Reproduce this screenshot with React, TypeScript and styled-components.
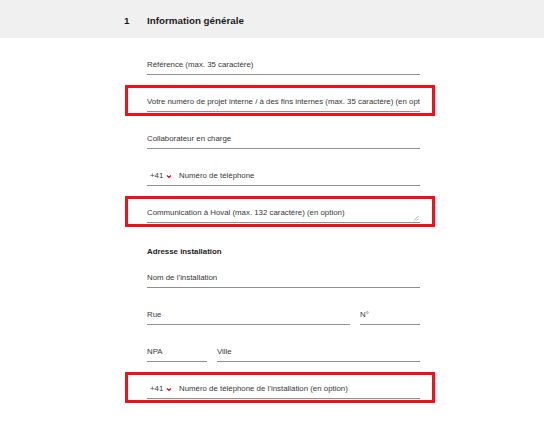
import styled, { createGlobalStyle } from 'styled-components';
import { FC } from 'react';

const GlobalStyle = createGlobalStyle`
  html, body {
    margin: 0;
    padding: 0;
    background: #fff;
    font-family: "Liberation Sans", Arial, sans-serif;
    color: #2b2b2b;
  }
`;

interface FieldProps {
  placeholder: string;
  flagged?: boolean;
}

const TextField: FC<FieldProps> = ({ placeholder, flagged }) => (
  <Field $flagged={flagged}>
    <Input placeholder={placeholder} />
  </Field>
);

const AreaField: FC<FieldProps> = ({ placeholder, flagged }) => (
  <Field $flagged={flagged}>
    <Area rows={1} placeholder={placeholder} />
    <Grip width="6" height="6" viewBox="0 0 6 6">
      <path d="M5.5 1 L1 5.5 M5.5 3.5 L3.5 5.5" stroke="#a0a0a0" strokeWidth="0.8" fill="none" />
    </Grip>
  </Field>
);

const PhoneField: FC<FieldProps> = ({ placeholder, flagged }) => (
  <Field $flagged={flagged}>
    <PhoneRow>
      <Prefix>
        +41
        <svg width="6" height="5" viewBox="0 0 6 5">
          <polyline points="1,1.5 3,3.5 5,1.5" fill="none" stroke="#e2001a" strokeWidth="1.2" />
        </svg>
      </Prefix>
      <Input placeholder={placeholder} />
    </PhoneRow>
  </Field>
);

const App: FC = () => {
  return (
    <>
      <GlobalStyle />
      <Band>
        <Container>
          <SectionHead>
            <Num>1</Num>
            <Title>Information générale</Title>
          </SectionHead>
        </Container>
      </Band>
      <Container>
        <Form>
          <TextField placeholder="Référence (max. 35 caractère)" />
          <TextField
            flagged
            placeholder="Votre numéro de projet interne / à des fins internes (max. 35 caractère) (en option)"
          />
          <TextField placeholder="Collaborateur en charge" />
          <PhoneField placeholder="Numéro de téléphone" />
          <AreaField flagged placeholder="Communication à Hoval (max. 132 caractère) (en option)" />
          <SubHeading>Adresse installation</SubHeading>
          <TextField placeholder="Nom de l’installation" />
          <Pair $cols="1fr 60px">
            <TextField placeholder="Rue" />
            <TextField placeholder="N°" />
          </Pair>
          <Pair $cols="60px 1fr">
            <TextField placeholder="NPA" />
            <TextField placeholder="Ville" />
          </Pair>
          <PhoneField flagged placeholder="Numéro de téléphone de l’installation (en option)" />
        </Form>
      </Container>
    </>
  );
};

export default App;

const Band = styled.div`
  background: #f1f0f0;
  height: 38px;
  display: flex;
  align-items: center;
`;

const Container = styled.div`
  width: 298px;
  margin: 0 auto;
`;

const SectionHead = styled.div`
  display: grid;
  grid-template-columns: 24px 1fr;
  align-items: center;
  padding-top: 2px;
  font-size: 9.8px;
  font-weight: bold;
  color: #1c1c1c;
`;

const Num = styled.span`
  padding-left: 1px;
`;

const Title = styled.span``;

const Form = styled.div`
  display: flex;
  flex-direction: column;
  gap: 22px;
  padding: 22px 0 40px 24px;
  width: 273px;
`;

const Field = styled.div<{ $flagged?: boolean }>`
  position: relative;
  border-bottom: 1px solid #909090;
  padding-bottom: 4px;
  min-width: 0;

  ${({ $flagged }) =>
    $flagged &&
    `
    &::after {
      content: '';
      position: absolute;
      top: -12px;
      bottom: -5px;
      left: -22px;
      right: -15px;
      border: 3px solid #f30f17;
      pointer-events: none;
    }
  `}
`;

const Input = styled.input`
  display: block;
  width: 100%;
  min-width: 0;
  height: 10px;
  padding: 0;
  margin: 0;
  border: none;
  outline: none;
  background: transparent;
  font-family: inherit;
  font-size: 7.85px;
  line-height: 10px;
  color: #2b2b2b;

  &::placeholder {
    color: #383838;
    opacity: 1;
  }
`;

const Area = styled.textarea`
  display: block;
  width: 100%;
  box-sizing: border-box;
  height: 10px;
  min-height: 10px;
  padding: 0;
  margin: 0;
  border: none;
  outline: none;
  background: transparent;
  font-family: inherit;
  font-size: 7.85px;
  line-height: 10px;
  overflow: hidden;
  resize: none;

  &::placeholder {
    color: #383838;
    opacity: 1;
  }
`;

const Grip = styled.svg`
  position: absolute;
  right: 1px;
  bottom: 1px;
`;

const PhoneRow = styled.div`
  display: flex;
  align-items: center;
`;

const Prefix = styled.span`
  display: flex;
  align-items: center;
  gap: 3px;
  padding-left: 3px;
  width: 29px;
  flex: none;
  font-size: 7.85px;
  line-height: 10px;
  color: #383838;
`;

const SubHeading = styled.div`
  margin: 2px 0 -6px;
  font-size: 7.85px;
  line-height: 10px;
  font-weight: bold;
  color: #1c1c1c;
`;

const Pair = styled.div<{ $cols: string }>`
  display: grid;
  grid-template-columns: ${({ $cols }) => $cols};
  column-gap: 10px;
`;
